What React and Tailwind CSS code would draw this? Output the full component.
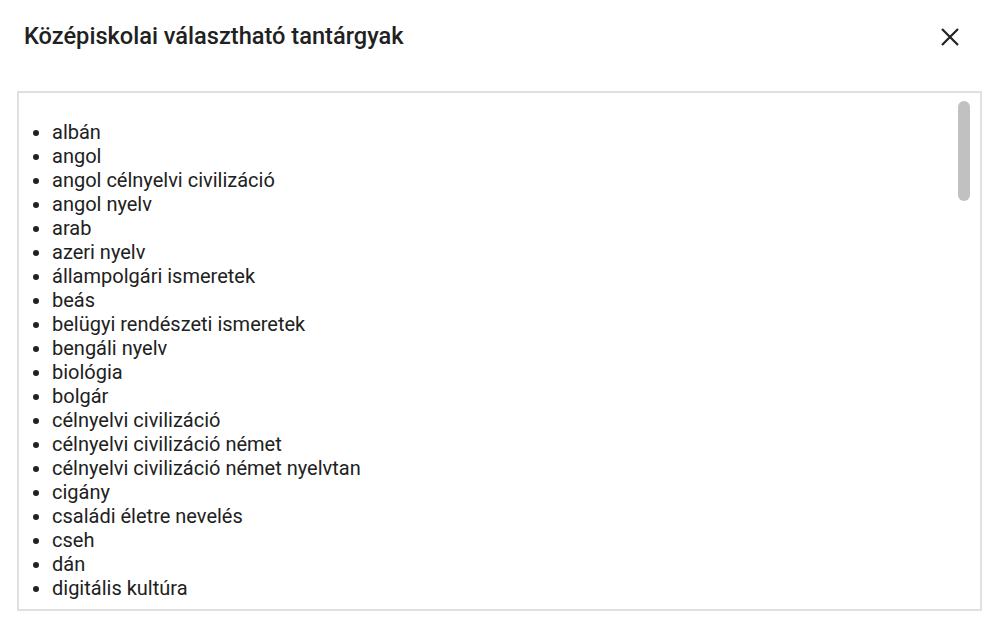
import React from "react";

const items = [
  "albán",
  "angol",
  "angol célnyelvi civilizáció",
  "angol nyelv",
  "arab",
  "azeri nyelv",
  "állampolgári ismeretek",
  "beás",
  "belügyi rendészeti ismeretek",
  "bengáli nyelv",
  "biológia",
  "bolgár",
  "célnyelvi civilizáció",
  "célnyelvi civilizáció német",
  "célnyelvi civilizáció német nyelvtan",
  "cigány",
  "családi életre nevelés",
  "cseh",
  "dán",
  "digitális kultúra",
];

export default function App() {
  return (
    <div className="w-[997px] h-[627px] bg-white text-[#212121] overflow-hidden" style={{ fontFamily: "Roboto, 'Noto Sans', sans-serif" }}>
      <div className="flex items-center justify-between pl-6 pr-[38px] h-[73px]">
        <h2 className="text-[23.6px] font-medium leading-none">Középiskolai választható tantárgyak</h2>
        <svg width="18" height="18" viewBox="0 0 18 18" className="text-[#212121]">
          <path d="M1 1 L17 17 M17 1 L1 17" stroke="currentColor" strokeWidth="2.2" fill="none" />
        </svg>
      </div>
      <div className="ml-[17px] mr-[15px] mt-[18px] h-[520px] border-2 border-[#e0e0e0] relative overflow-hidden">
        <ul className="list-disc pl-[33px] pt-[27px] text-[20px] leading-[24px]">
          {items.map((t) => (
            <li key={t} className="pl-0">{t}</li>
          ))}
        </ul>
        <div className="absolute right-[10px] top-[8px] w-[12px] h-[100px] rounded-full bg-[#c1c1c1]" />
      </div>
    </div>
  );
}
